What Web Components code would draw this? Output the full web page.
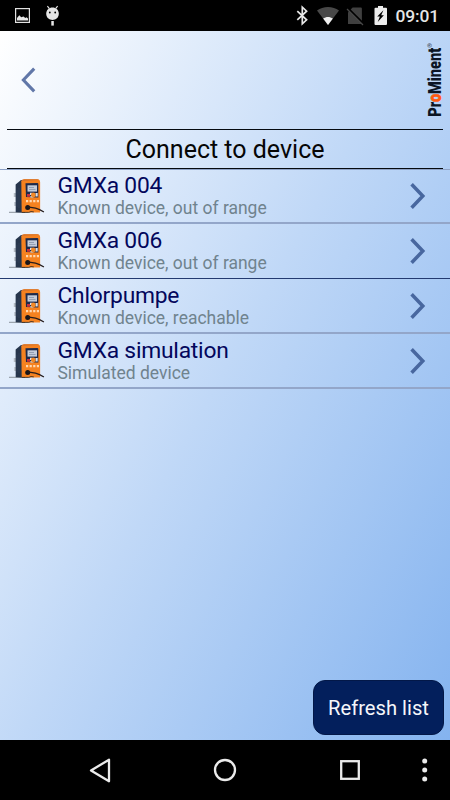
<!DOCTYPE html>
<html lang="en">
<head>
<meta charset="utf-8">
<title>Connect to device</title>
<style>
html,body{margin:0;height:100%;overflow:hidden}
body{font-family:Roboto,"Liberation Sans",sans-serif;background:#000}
</style>
</head>
<body>
<device-screen></device-screen>
<script>
function define(name, html) {
  const t = document.createElement('template');
  t.innerHTML = html;
  customElements.define(name, class extends HTMLElement {
    constructor() {
      super();
      this.attachShadow({mode: 'open'}).appendChild(t.content.cloneNode(true));
    }
  });
}

define('status-bar', `
<style>
:host{display:flex;align-items:center;height:31px;background:#000;color:#e6e6e6;box-sizing:border-box}
svg{display:block;flex:none}
.clock{margin-left:.5px;font-size:17.400px;line-height:31px;font-weight:500;letter-spacing:-.1px;padding-top:2px}
</style>
<svg width="395" height="31" viewBox="0 0 395 31">
  <rect x="15.6" y="8.6" width="13.8" height="13.8" fill="none" stroke="#e2e2e2" stroke-width="1.2"/>
  <path d="M17 20.5V18l2.3-2.7 1.9 2 2.3-.8 1.8 1.4 1.2-.7 1.5 1.3v2z" fill="#e6e6e6"/>
  <path d="M47.4 6.2l2 2.5M57.6 6.2l-2 2.5" stroke="#e6e6e6" stroke-width="1.1"/>
  <path d="M46.2 13.8c0-4 2.8-6.3 6.3-6.3s6.3 2.3 6.3 6.3c0 3.8-3 6.2-6.3 6.2s-6.3-2.4-6.3-6.2z" fill="#e6e6e6"/>
  <rect x="51.3" y="21" width="2.5" height="4.6" fill="#e6e6e6"/>
  <circle cx="49.8" cy="12.5" r=".9" fill="#000"/><circle cx="55.2" cy="12.5" r=".9" fill="#000"/>
  <path d="M297.3 11.2l9.3 8.6-4.3 4V7.2l4.3 4-9.3 8.6" fill="none" stroke="#e8e8e8" stroke-width="1.7"/>
  <path d="M328 25L317 10.6c6-4.9 16-4.9 22 0z" fill="#484848"/>
  <path d="M328 25l-4.9-6.5c3-2.1 6.8-2.1 9.8 0z" fill="#f0f0f0"/>
  <path d="M352.6 7.6h8.200q1.100 0 1.100 1.100v14.200q0 1.100-1.100 1.100H348v-11.800z" fill="#404040"/>
  <path d="M347.800 8.300l15.400 15.400" stroke="#000" stroke-width="2.400"/>
  <path d="M347 9l16 16" stroke="#474747" stroke-width="1.300"/>
  <path d="M378 6h5v1.700h3q1 0 1 1v15.200q0 1-1 1h-10.500q-1 0-1-1V8.700q0-1 1-1h2.500z" fill="#ededed"/>
  <path d="M383.400 10.200l-6.200 6.300h2.700l-2.200 5.500 6.200-6.700h-2.700z" fill="#000"/>
</svg>
<span class="clock"><slot></slot></span>`);

define('brand-logo', `
<style>
:host{display:block;width:17px;height:78px}
svg{display:block;overflow:visible}
text{font-family:Roboto,"Liberation Sans",sans-serif}
</style>
<svg width="17" height="78" viewBox="0 0 17 78">
  <g transform="translate(15.500 75.800) rotate(-90)">
    <text font-size="17.500" font-weight="900" fill="#0b1524" textLength="69" lengthAdjust="spacingAndGlyphs">Pr<tspan fill="#ff5a10" stroke="#ff5a10" stroke-width=".6">o</tspan>Minent</text>
    <text x="69" y="-8.500" font-size="6" fill="#26323f">®</text>
  </g>
</svg>`);

define('app-header', `
<style>
:host{display:flex;justify-content:space-between;height:98px;padding:0 8px 0 21px;box-sizing:border-box}
svg{display:block;margin-top:35px}
brand-logo{margin-top:10px}
</style>
<svg width="16" height="28" viewBox="0 0 16 28"><path d="M13.200 2.600L2.400 14l10.800 11.400" fill="none" stroke="#6177a8" stroke-width="3.100"/></svg>
<brand-logo></brand-logo>`);

define('page-title', `
<style>
:host{display:block;height:40px;box-sizing:border-box;margin:0 7px;border-top:1px solid #050a10;border-bottom:1px solid #050a10;text-align:center;font-size:25px;line-height:40px;color:#060606}
</style>
<slot></slot>`);

define('pump-icon', `
<style>:host{display:block;width:37px;height:36px}svg{display:block}</style>
<svg width="37" height="36" viewBox="0 0 37 36">
  <path d="M0 34.300h13" stroke="#89919a" stroke-width="1"/>
  <path d="M4.800 15h2.500v4H4.800zM5.300 24h2v4h-2z" fill="#b4bcc6"/>
  <path d="M6.600 6.500L12 2l4 1V34.800l-9.300-.6z" fill="#26354c"/>
  <path d="M8 12v17M10 10v20" stroke="#34445d" stroke-width=".7"/>
  <path d="M12.300 3.300q.8-2 3-2h12.800q3 0 3 3V34.500H12.700z" fill="#f58220"/>
  <path d="M12.300 3.300q.8-2 3-2h12.800q1.300 0 2 .8l-14.600 1z" fill="#d9752a"/>
  <path d="M16.500 5.300l11.800-.3q1 0 1 1v13.500l-12.300-.6z" fill="#1c2a4b"/>
  <path d="M18.500 7.300h9.500v6.300h-9.500z" fill="#c3ccda"/>
  <path d="M20 9.500h5M20 11.500h6.500" stroke="#8793a8" stroke-width=".8"/>
  <path d="M18 16h3v2.800h-3z" fill="#c5313f"/><path d="M21 14.800h2.400v2.300H21zM26.500 15h2.200v3.500h-2.200zM21.400 18h3v1.500h-3z" fill="#dce1e8"/>
  <circle cx="24.300" cy="17" r="2.400" fill="#f28a28"/>
  <path d="M17 23.200h13" stroke="#ffd9b4" stroke-width="2.200" stroke-dasharray="2.200 1.400"/>
  <circle cx="18.700" cy="29.500" r="2.500" fill="#18151a"/>
  <path d="M18.500 28.800l8 1.300q4 1 8.400 4" fill="none" stroke="#241b1b" stroke-width="1.200"/>
  <path d="M12.800 34.400h7q2-1.500 5-.5" stroke="#222" stroke-width=".8" fill="none"/>
</svg>`);

define('device-row', `
<style>
:host{display:flex;align-items:flex-start;height:55px;box-sizing:border-box;padding:0 23px 0 9px;border-bottom:2px solid #93a6c9}
:host(:first-child){margin-top:-1px}
:host([strong]){border-bottom:1px solid #233a70}
pump-icon{margin-top:9px}
.t{flex:1;margin-left:11.500px;padding-top:4px;white-space:nowrap}
.n{font-size:22.800px;line-height:26px;color:#03075c;letter-spacing:-.22px}
.s{font-size:17.480px;line-height:19px;color:#70838e}
svg{display:block;margin-top:12px}
</style>
<pump-icon></pump-icon>
<div class="t"><div class="n"><slot></slot></div><div class="s"><slot name="state"></slot></div></div>
<svg width="18" height="30" viewBox="0 0 18 30"><path d="M2.600 3.200L13.800 15 2.600 26.800" fill="none" stroke="#48679f" stroke-width="3.500"/></svg>`);

define('action-button', `
<style>
:host{display:block;width:131px;height:55px;box-sizing:border-box;border-radius:12px;background:#031f5c;border:1px solid #031848;color:#f5f6fa;text-align:center;font-size:20.200px;line-height:54px}
</style><slot></slot>`);

define('nav-bar', `
<style>
:host{display:grid;grid-template-columns:75px 50px 75px 50px 75px 50px 25px 50px;align-items:center;height:60px;background:#000}
svg{display:block;width:50px;height:60px;fill:none;stroke:#ebebeb;stroke-width:2.300}
.more{fill:#ebebeb;stroke:none}
</style>
<span></span>
<svg viewBox="0 0 50 60"><path d="M34 19.700v21.600L16 30.500z" stroke-linejoin="round"/></svg>
<span></span>
<svg viewBox="0 0 50 60"><circle cx="25" cy="30" r="10"/></svg>
<span></span>
<svg viewBox="0 0 50 60"><rect x="16.200" y="21.200" width="17.600" height="17.600"/></svg>
<span></span>
<svg class="more" viewBox="0 0 50 60"><circle cx="24.700" cy="21" r="2.500"/><circle cx="24.700" cy="30" r="2.500"/><circle cx="24.700" cy="39" r="2.500"/></svg>`);

define('device-screen', `
<style>
:host{display:flex;flex-direction:column;width:450px;height:800px}
main{flex:1;display:flex;flex-direction:column;background:linear-gradient(119deg,#fff 0%,#c0d8f7 49%,#84b3ef 100%)}
.list{display:block;border-top:1px solid #8ea2c6}
action-button{margin:auto 6px 5px auto}
</style>
<status-bar>09:01</status-bar>
<main>
  <app-header></app-header>
  <page-title>Connect to device</page-title>
  <div class="list">
    <device-row>GMXa 004<span slot="state">Known device, out of range</span></device-row>
    <device-row strong>GMXa 006<span slot="state">Known device, out of range</span></device-row>
    <device-row>Chlorpumpe<span slot="state">Known device, reachable</span></device-row>
    <device-row>GMXa simulation<span slot="state">Simulated device</span></device-row>
  </div>
  <action-button>Refresh list</action-button>
</main>
<nav-bar></nav-bar>`);
</script>
</body>
</html>
